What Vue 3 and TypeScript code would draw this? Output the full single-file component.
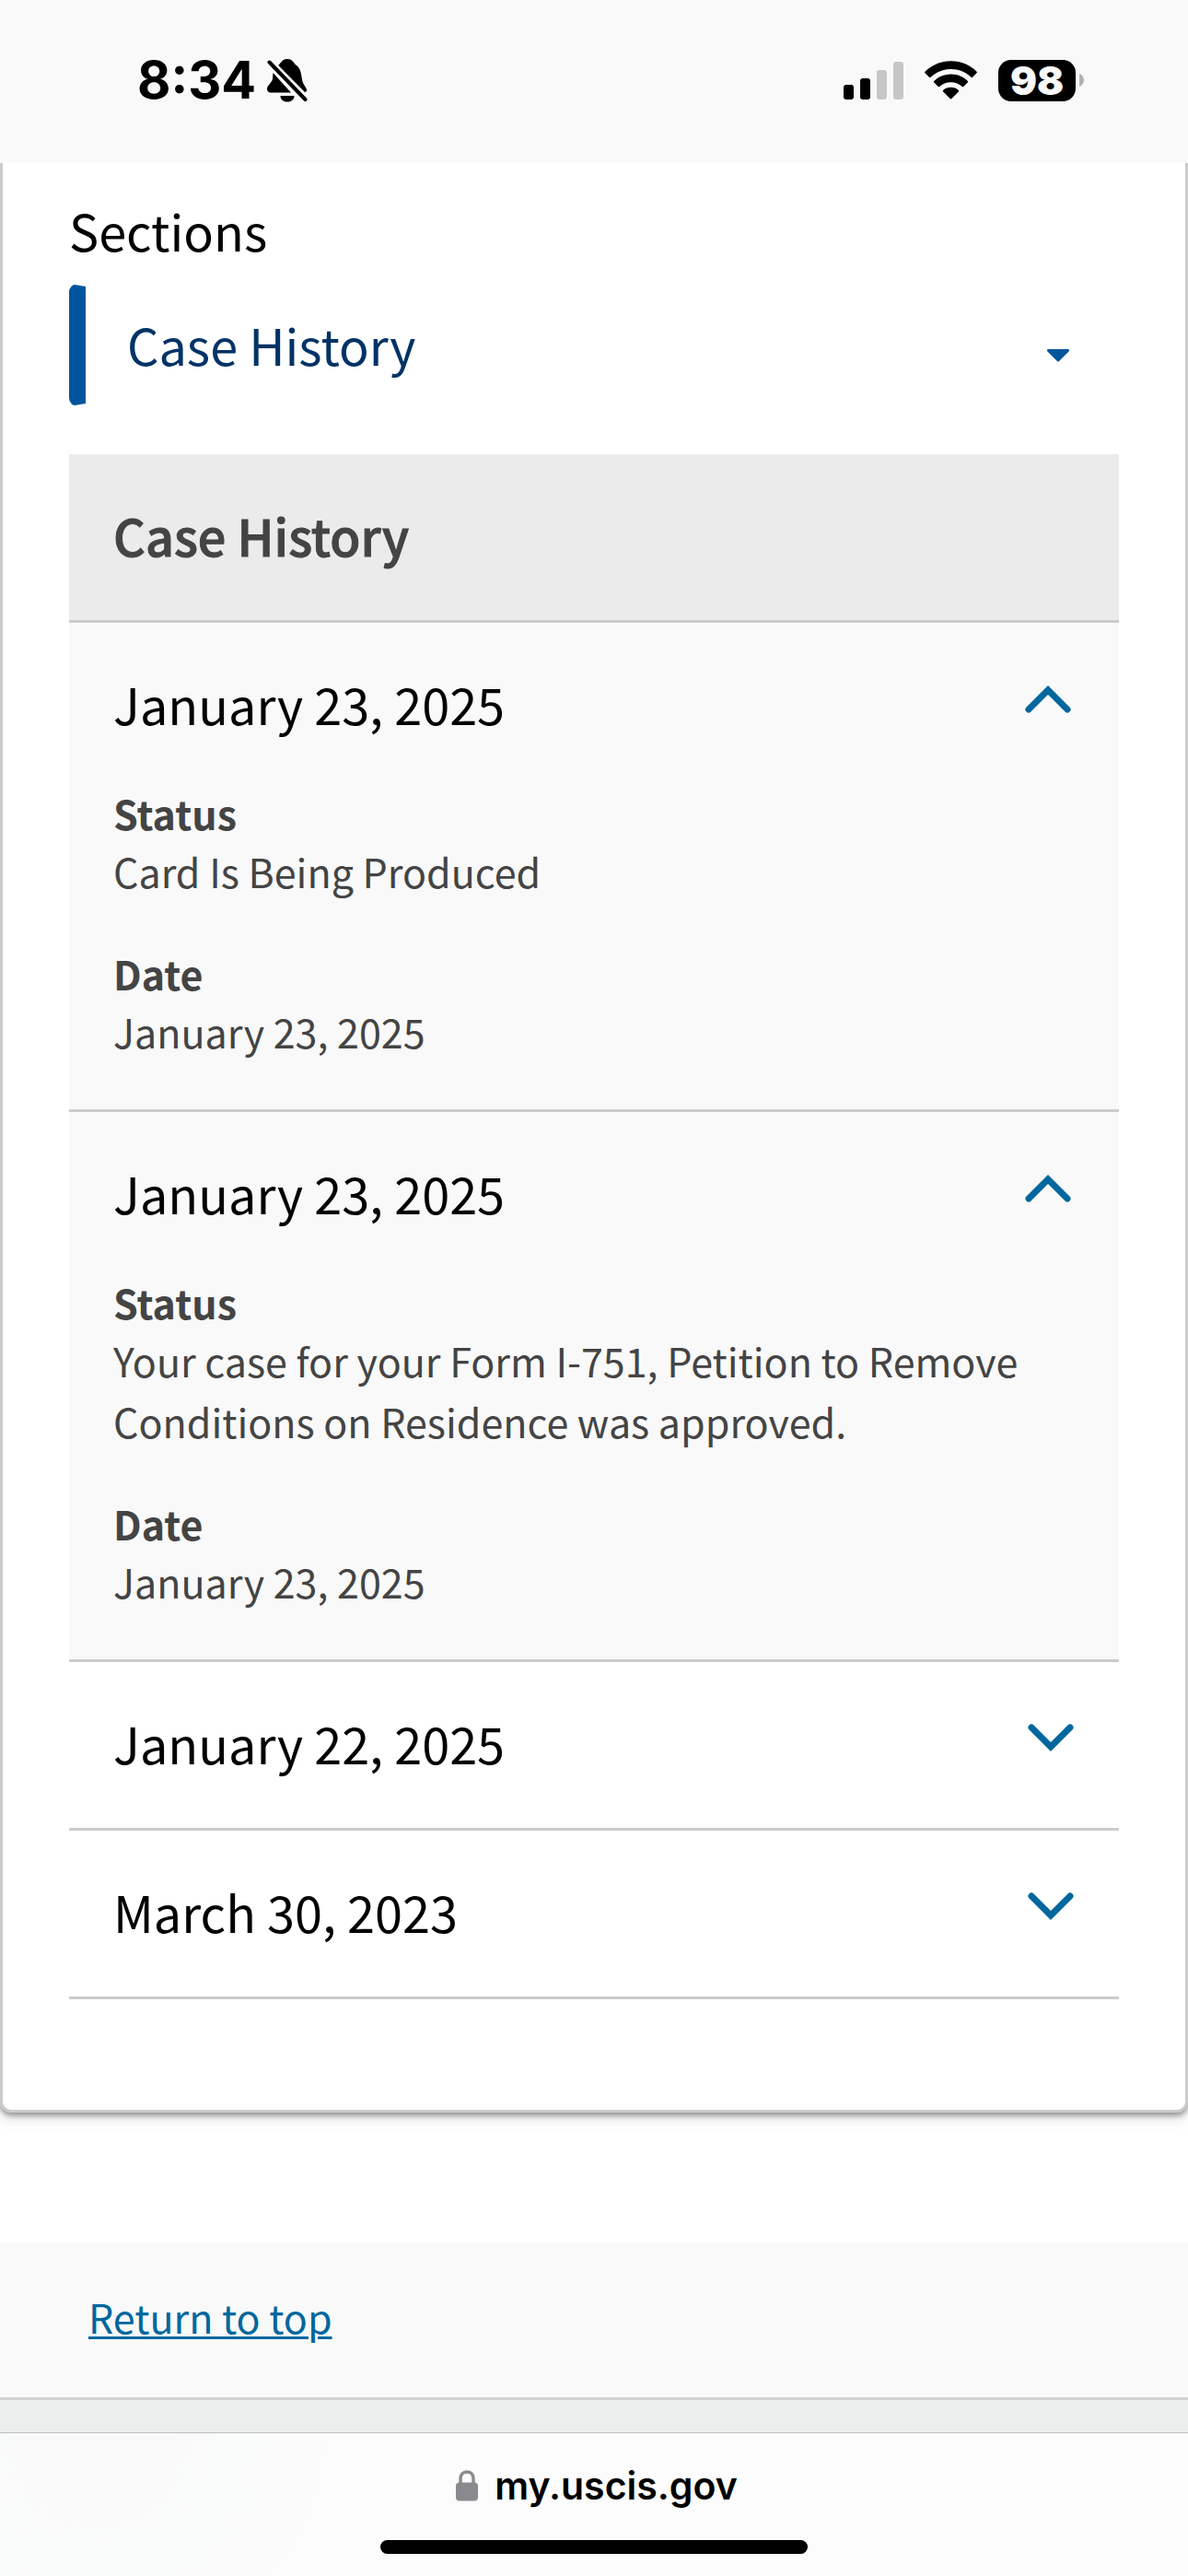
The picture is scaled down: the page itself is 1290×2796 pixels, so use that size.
<script setup lang="ts">
import { ref } from 'vue'

interface Detail {
  label: string
  value: string
}

interface HistoryEntry {
  id: number
  title: string
  open: boolean
  details: Detail[]
}

const section = ref<string>('Case History')

const entries = ref<HistoryEntry[]>([
  {
    id: 1,
    title: 'January 23, 2025',
    open: true,
    details: [
      { label: 'Status', value: 'Card Is Being Produced' },
      { label: 'Date', value: 'January 23, 2025' },
    ],
  },
  {
    id: 2,
    title: 'January 23, 2025',
    open: true,
    details: [
      {
        label: 'Status',
        value: 'Your case for your Form I-751, Petition to Remove Conditions on Residence was approved.',
      },
      { label: 'Date', value: 'January 23, 2025' },
    ],
  },
  { id: 3, title: 'January 22, 2025', open: false, details: [] },
  { id: 4, title: 'March 30, 2023', open: false, details: [] },
])

function toggle(entry: HistoryEntry): void {
  entry.open = !entry.open
}
</script>

<template>
  <div class="screen">
    <header class="status-bar">
      <div class="status-left">
        <span class="clock">8:34</span>
        <svg class="bell" width="44" height="48" viewBox="0 0 44 48" aria-label="Silent mode">
          <path d="M12 8C15 6 16 1 22 1c6 0 7 5 10 7 5 4 5 10 6 15 1 7 5 8 5 12 0 1-1 2-2 2L12 8Z" />
          <path d="M6.500 16 26 37.500H4c-3 0-4-2-4-4 0-4 5-6 6-11Z" />
          <path d="M14.500 41h15c0 4-3 6.500-7.500 6.500s-7.500-2.500-7.500-6.500Z" />
          <path d="M2.500 4.500 41.500 45" stroke="#f9f9f9" stroke-width="9" />
          <path d="M2.500 4.500 41.500 45" stroke="#000" stroke-width="4" stroke-linecap="round" />
        </svg>
      </div>
      <div class="status-right">
        <svg width="65" height="41" viewBox="0 0 65 41" aria-label="Signal">
          <rect x="0" y="25" width="11" height="16" rx="3" />
          <rect x="18" y="18" width="11" height="23" rx="3" />
          <rect x="36" y="9" width="11" height="32" rx="3" fill="#c7c7c7" />
          <rect x="54" y="0" width="11" height="41" rx="3" fill="#c7c7c7" />
        </svg>
        <svg width="57" height="42" viewBox="0 0 58 42" aria-label="Wi-Fi">
          <path d="M29 0C17.500 0 7.500 4.500 .5 11.500c-.5.5-.5 1.200 0 1.700L5 17.700c.5.500 1.200.500 1.700 0C12.500 12 20.500 8.700 29 8.700S45.500 12 51.300 17.700c.5.500 1.200.500 1.700 0l4.500-4.500c.5-.5.5-1.200 0-1.700C50.500 4.500 40.500 0 29 0Z" />
          <path d="M29 14.500c-7.300 0-13.800 2.800-18.600 7.400-.5.500-.5 1.200 0 1.700l4.600 4.500c.5.500 1.100.500 1.600 0 3.200-3 7.600-4.900 12.400-4.900s9.200 1.900 12.400 4.900c.5.500 1.100.500 1.600 0l4.600-4.500c.5-.5.5-1.200 0-1.700C42.800 17.300 36.300 14.500 29 14.500Z" />
          <path d="M29 29c-3.300 0-6.200 1.200-8.500 3.100-.5.400-.5 1.200 0 1.700l7.600 7.600c.5.500 1.300.500 1.800 0l7.600-7.600c.5-.5.5-1.300 0-1.700C35.200 30.200 32.300 29 29 29Z" />
        </svg>
        <div class="battery">
          <span class="battery-body">98</span>
          <svg width="5" height="14" viewBox="0 0 5 14" aria-hidden="true">
            <path d="M0 0c3 1 5 4 5 7s-2 6-5 7Z" fill="#b1b1b1" />
          </svg>
        </div>
      </div>
    </header>

    <main class="card">
      <label class="section-label" for="section">Sections</label>
      <div class="section-picker">
        <select id="section" v-model="section">
          <option>Case History</option>
        </select>
        <svg class="caret" width="24" height="14" viewBox="0 0 24 14" aria-hidden="true">
          <path d="M1 0h22c1 0 1.300 1.500.5 2.500L13 13c-.6.700-1.400.700-2 0L.5 2.500C-.3 1.500 0 0 1 0Z" fill="#00559d" />
        </svg>
      </div>

      <section class="history">
        <h2 class="history-title">Case History</h2>
        <article v-for="entry in entries" :key="entry.id" class="entry" :class="{ open: entry.open }">
          <h3 class="entry-heading">
            <button type="button" class="entry-toggle" :aria-expanded="entry.open" @click="toggle(entry)">
              <span>{{ entry.title }}</span>
              <svg class="chevron" width="54" height="32" viewBox="0 0 54 32" aria-hidden="true">
                <path :d="entry.open ? 'M4 27 25 6 46 27' : 'M7 4 28 25 49 4'" />
              </svg>
            </button>
          </h3>
          <dl v-if="entry.open" class="details">
            <div v-for="detail in entry.details" :key="detail.label" class="detail">
              <dt>{{ detail.label }}</dt>
              <dd>{{ detail.value }}</dd>
            </div>
          </dl>
        </article>
      </section>
    </main>

    <nav class="return">
      <a href="#section">Return to top</a>
    </nav>
    <div class="footer-band"></div>

    <footer class="browser-bar">
      <div class="address">
        <svg width="24" height="34" viewBox="0 0 24 34" aria-hidden="true">
          <path d="M5 15V9.500C5 5 7.800 2 12 2s7 3 7 7.500V15" fill="none" stroke="#8a8a8e" stroke-width="3.500" />
          <rect x="0" y="13.500" width="24" height="20" rx="4" fill="#8a8a8e" />
        </svg>
        <span>my.uscis.gov</span>
      </div>
      <div class="home-indicator"></div>
    </footer>
  </div>
</template>

<style>
body {
  margin: 0;
  background: #fff;
}
</style>

<style scoped>
.screen {
  display: flex;
  flex-direction: column;
  min-height: 100vh;
  color: #000;
  font-family: "Noto Sans CJK SC", "Noto Sans", sans-serif;
  font-size: 43px;
  line-height: 66px;
}

.screen * {
  box-sizing: border-box;
}

svg {
  display: block;
  flex: none;
}

/* Stays above the card so that the card's shadow does not spill over it */
.status-bar {
  position: relative;
  z-index: 1;
  display: flex;
  justify-content: space-between;
  align-items: flex-start;
  padding: 63px 113px 66px 149px;
  background: #f9f9f9;
  font-family: Inter, "Liberation Sans", sans-serif;
}

.status-left,
.status-right {
  display: flex;
  align-items: center;
  height: 48px;
}

.status-left {
  gap: 12px;
}

.status-right {
  gap: 23px;
}

.clock {
  font-size: 56px;
  font-weight: 700;
  line-height: 50px;
}

.battery {
  display: flex;
  align-items: center;
  gap: 4px;
}

.battery-body {
  width: 84px;
  border-radius: 14px;
  background: #000;
  color: #f9f9f9;
  font-size: 43px;
  font-weight: 900;
  line-height: 45px;
  text-align: center;
}

.card {
  padding: 33px 72px 120px;
  border: solid #ccc;
  border-width: 0 3px 3px;
  border-radius: 0 0 12px 12px;
  background: #fff;
  box-shadow: 0 3px 6px rgba(0, 0, 0, 0.4), 0 6px 18px rgba(0, 0, 0, 0.12);
}

.section-label {
  display: block;
  font-size: 54px;
  line-height: 80px;
}

.section-picker {
  display: grid;
  align-items: center;
  margin: 18px 0 52px;
}

.section-picker > * {
  grid-area: 1 / 1;
}

.section-picker select {
  width: 100%;
  margin: 0;
  padding: 23px 45px 24px;
  border: 3px solid transparent;
  border-left: 18px solid #00559d;
  border-radius: 9px;
  appearance: none;
  background: none;
  color: #003366;
  font-family: inherit;
  font-size: 54px;
  line-height: 80px;
  outline: none;
}

.section-picker .caret {
  justify-self: end;
  margin: 22px 54px 0 0;
  pointer-events: none;
}

/* The family has no semibold, so medium is thickened slightly */
.history-title {
  margin: 0;
  padding: 48px 48px 52px;
  border-bottom: 3px solid #ccc;
  background: #ebebeb;
  color: #444;
  font-size: 54px;
  font-weight: 500;
  line-height: 80px;
  -webkit-text-stroke: 1px #444;
}

.entry {
  border-bottom: 3px solid #ccc;
}

.entry.open {
  background: #f9f9f9;
}

.entry-heading {
  margin: 0;
}

.entry-toggle {
  display: flex;
  justify-content: space-between;
  align-items: flex-start;
  width: 100%;
  padding: 48px 48px 52px;
  border: 0;
  background: none;
  color: #000;
  font-family: inherit;
  font-size: 54px;
  font-weight: 400;
  line-height: 80px;
  text-align: left;
}

.chevron {
  margin-top: 19px;
  fill: none;
  stroke: #00679e;
  stroke-width: 7;
  stroke-linecap: round;
}

.details {
  display: flex;
  flex-direction: column;
  gap: 52px;
  margin: 0;
  padding: 0 48px 52px;
  color: #444;
}

.detail {
  display: flex;
  flex-direction: column;
  gap: 4px;
}

dt {
  font-weight: 700;
  line-height: 52px;
}

dd {
  margin: 0;
}

.return {
  margin-top: 141px;
  padding: 47px 96px 55px;
  border-bottom: 3px solid #d0d4d3;
  background: #f9f9f9;
}

.return a {
  color: #00679e;
  text-decoration-thickness: 3px;
  text-underline-offset: 3px;
}

.footer-band {
  flex: 1;
  min-height: 35px;
  background: #ebeeed;
}

.browser-bar {
  display: flex;
  flex-direction: column;
  align-items: center;
  gap: 30px;
  padding: 28px 0 24px;
  border-top: 1px solid #bfbfbf;
  background: radial-gradient(circle at 105px 0, #f9f9f9 0, #fafbfb 150px, #fcfcfc 260px);
  font-family: Inter, "Liberation Sans", sans-serif;
}

.address {
  display: flex;
  align-items: center;
  gap: 18px;
  padding-left: 6px;
  font-size: 41px;
  font-weight: 600;
  line-height: 58px;
}

.home-indicator {
  width: 36%;
  height: 15px;
  border-radius: 8px;
  background: #000;
}
</style>
